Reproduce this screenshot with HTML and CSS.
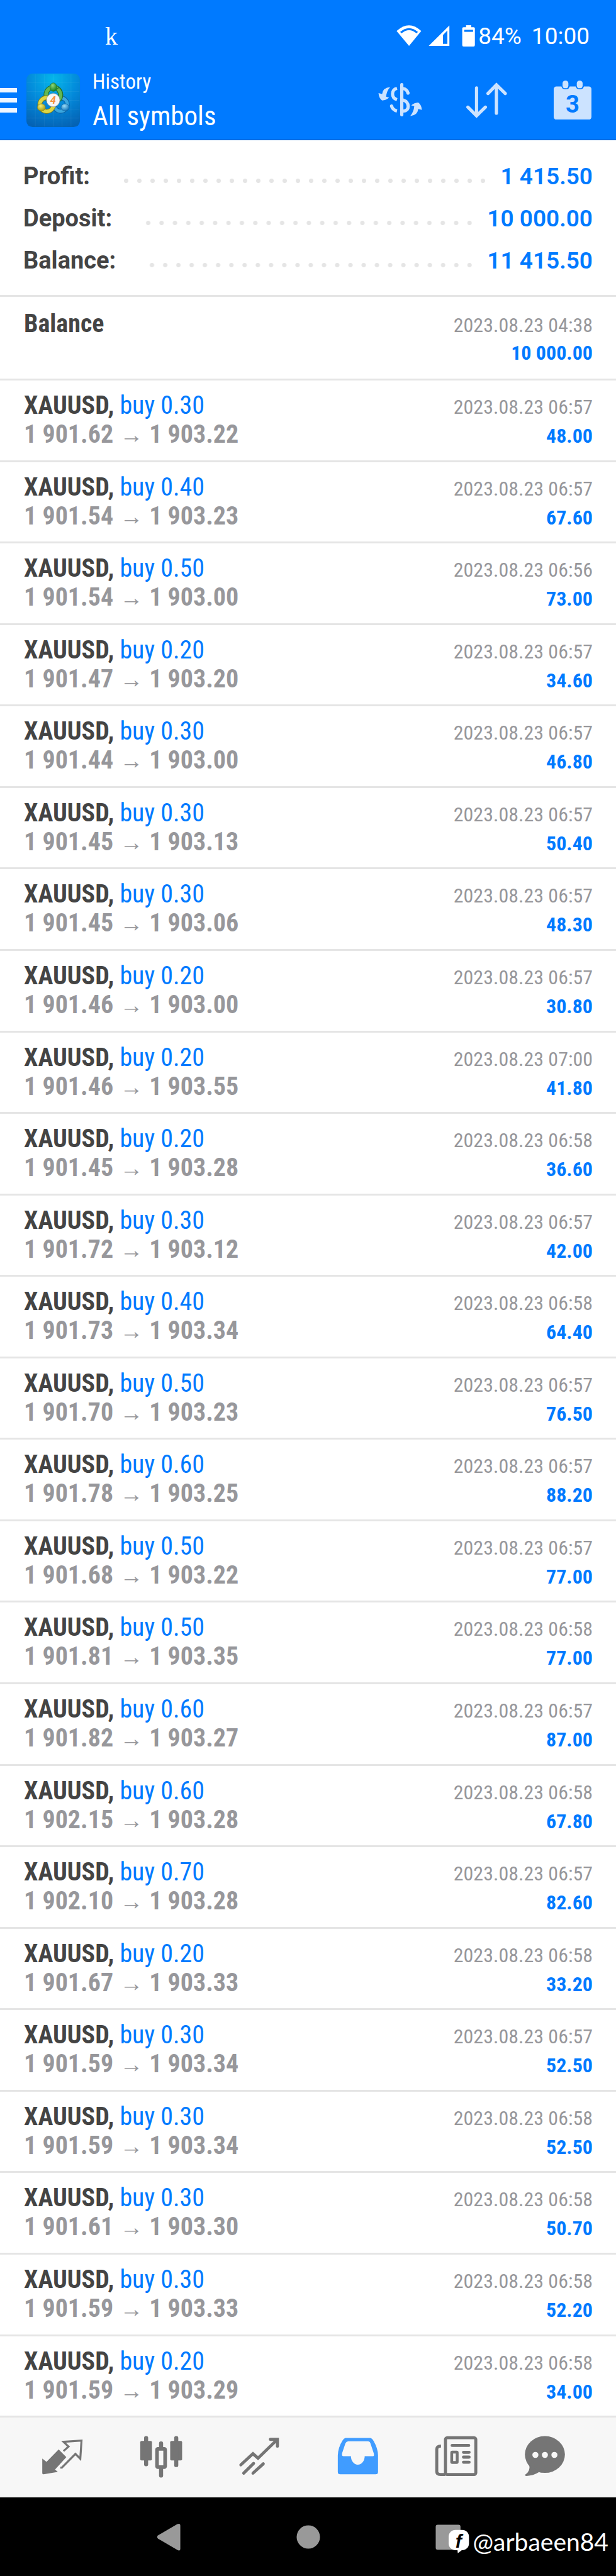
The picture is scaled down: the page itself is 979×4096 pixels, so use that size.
FILE: index.html
```html
<!DOCTYPE html>
<html lang="en">
<head>
    <meta charset="UTF-8">
    <meta name="viewport" content="width=device-width, initial-scale=1.0">
    <title>History</title>
    <link rel="stylesheet" href="styles.css">
</head>
<body>
    <header class="header">
        <div class="status">
            <span class="status-app">k</span>
            <svg class="status-icons" viewBox="410 118 398 112" aria-hidden="true">
                <path fill="#fff" d="M414 150Q476 93 537 150L476 224Z"/>
                <path fill="none" stroke="#007aff" stroke-width="10" d="M435 158Q476 123 517 158"/>
                <path fill="#fff" fill-rule="evenodd" d="M574 224L677 122V224ZM645 170V214H667V147Z"/>
                <rect fill="#fff" x="741" y="131" width="63" height="96" rx="7"/>
                <rect fill="#fff" x="760" y="121" width="26" height="14"/>
                <rect fill="#007aff" x="751" y="144" width="44" height="10"/>
            </svg>
            <span class="status-battery">84%</span>
            <span class="status-time">10:00</span>
        </div>
        <div class="appbar">
            <button class="menu" aria-label="Menu"><span></span><span></span><span></span></button>
            <svg class="logo" viewBox="132 366 264 264" aria-hidden="true">
                <defs>
                    <radialGradient id="bg" cx="0.5" cy="0.1" r="0.95">
                        <stop offset="0" stop-color="#04b6ea"/>
                        <stop offset="0.5" stop-color="#0389da"/>
                        <stop offset="1" stop-color="#0462b4"/>
                    </radialGradient>
                    <radialGradient id="green" cx="0.4" cy="0.3" r="0.7"><stop offset="0" stop-color="#8fd67a"/><stop offset="1" stop-color="#13801f"/></radialGradient>
                    <radialGradient id="yellow" cx="0.4" cy="0.3" r="0.7"><stop offset="0" stop-color="#f0ec7c"/><stop offset="1" stop-color="#a69a10"/></radialGradient>
                    <radialGradient id="blue" cx="0.4" cy="0.3" r="0.7"><stop offset="0" stop-color="#9bdcf8"/><stop offset="1" stop-color="#0f72b8"/></radialGradient>
                </defs>
                <rect x="132" y="366" width="264" height="264" rx="30" fill="url(#bg)"/>
                <path fill="none" stroke="#fff" stroke-opacity="0.1" stroke-width="2" d="M176 368V628M220 368V628M264 368V628M308 368V628M352 368V628M134 410H394M134 454H394M134 498H394M134 542H394M134 586H394"/>
                <g fill="none" stroke-linecap="round">
                    <circle cx="265" cy="470" r="36" stroke="#226f2c" stroke-width="24"/>
                    <circle cx="265" cy="470" r="36" stroke="#62b855" stroke-width="18"/>
                    <circle cx="301" cy="519" r="33" stroke="#0d5c9d" stroke-width="22"/>
                    <circle cx="301" cy="519" r="33" stroke="#3aa7df" stroke-width="16"/>
                    <circle cx="232" cy="519" r="34" stroke="#827b10" stroke-width="23"/>
                    <circle cx="232" cy="519" r="34" stroke="#ddd544" stroke-width="17"/>
                    <path stroke="#226f2c" stroke-width="24" d="M292 447Q308 470 296 491"/>
                    <path stroke="#62b855" stroke-width="17" d="M292 447Q308 470 296 491"/>
                </g>
                <ellipse cx="265" cy="433" rx="17" ry="21" fill="url(#green)" stroke="#176a20" stroke-width="2"/>
                <ellipse cx="206" cy="533" rx="20" ry="18" fill="url(#yellow)" stroke="#857c10" stroke-width="2"/>
                <ellipse cx="323" cy="533" rx="20" ry="18" fill="url(#blue)" stroke="#0e5f9d" stroke-width="2"/>
                <circle cx="264" cy="497" r="33" fill="#f6f6f6" stroke="#8c8c8c" stroke-width="2"/>
                <text x="263" y="515" text-anchor="middle" class="logo-digit">4</text>
            </svg>
            <h1 class="title">
                <span class="title-small">History</span>
                <span class="title-big">All symbols</span>
            </h1>
            <button class="action" aria-label="Deals">
                <svg viewBox="340 392 232 208" fill="none" stroke="#cce3ff" stroke-width="16">
                    <path stroke-linecap="round" d="M464 418V568"/>
                    <path d="M440 436Q418 442 418 464T440 493"/>
                    <path d="M440 549Q418 544 413 524"/>
                    <path d="M470 437Q490 440 495 460M470 494Q496 503 496 526T470 550"/>
                    <circle cx="413" cy="524" r="8" fill="#cce3ff" stroke="none"/>
                    <circle cx="495" cy="460" r="8" fill="#cce3ff" stroke="none"/>
                    <path id="swap" fill="#cce3ff" stroke="none" d="M406 430Q370 432 366 465L348 460Q350 486 366 497Q386 496 401 483L386 478Q388 450 406 430Z"/>
                    <use href="#swap" transform="rotate(180 456 502)"/>
                </svg>
            </button>
            <button class="action" aria-label="Sort">
                <svg viewBox="768 392 232 208" fill="none" stroke="#cce3ff" stroke-width="16" stroke-linecap="round">
                    <path d="M835 434V572M792 530L835 573L879 530M934 560V420M892 462L934 419L978 462"/>
                </svg>
            </button>
            <button class="action" aria-label="Period">
                <svg viewBox="1198 392 232 208">
                    <rect x="1220" y="427" width="188" height="165" rx="13" fill="#cce3ff"/>
                    <rect x="1258" y="391" width="42" height="50" rx="18" fill="#007aff"/>
                    <rect x="1329" y="391" width="42" height="50" rx="18" fill="#007aff"/>
                    <rect x="1264" y="398" width="29" height="38" rx="13" fill="#cce3ff"/>
                    <rect x="1335" y="398" width="29" height="38" rx="13" fill="#cce3ff"/>
                    <text x="1314" y="557" text-anchor="middle" class="calendar-day">3</text>
                </svg>
            </button>
        </div>
    </header>

    <section class="summary">
        <p><span>Profit:</span><i class="dots"></i><b>1 415.50</b></p>
        <p><span>Deposit:</span><i class="dots"></i><b>10 000.00</b></p>
        <p><span>Balance:</span><i class="dots"></i><b>11 415.50</b></p>
    </section>

    <div class="deal deal-balance">
        <div class="line"><strong>Balance</strong><time>2023.08.23 04:38</time></div>
        <div class="line"><span></span><b class="profit">10 000.00</b></div>
    </div>

    <ul class="deals" id="deals"></ul>

    <nav class="tabs">
        <button aria-label="Quotes">
            <svg viewBox="198 550 224 224">
                <path fill="#757575" d="M292 621L330 659L274 720L288 732L218 744Q211 744 211 738V666L232 682Z"/>
                <path fill="none" stroke="#757575" stroke-width="10" d="M316 629L341 607L316 583L405 577L399 667L375 643L308 711H300"/>
            </svg>
        </button>
        <button aria-label="Charts">
            <svg viewBox="686 550 224 224" fill="#757575">
                <rect x="695" y="579" width="58" height="96" rx="6"/>
                <rect x="714" y="555" width="20" height="149" rx="9"/>
                <rect x="843" y="579" width="59" height="96" rx="6"/>
                <rect x="863" y="555" width="20" height="153" rx="9"/>
                <rect x="788" y="581" width="20" height="36" rx="9"/>
                <rect x="788" y="708" width="20" height="52" rx="9"/>
                <rect x="778" y="618" width="40" height="90" rx="4" fill="none" stroke="#757575" stroke-width="18"/>
            </svg>
        </button>
        <button aria-label="Trade">
            <svg viewBox="1176 550 224 224" fill="none" stroke="#757575" stroke-width="15" stroke-linecap="round">
                <path d="M1197 697L1257 642L1282 664L1376 573M1343 571H1378V605M1211 738L1260 690M1257 738L1308 692"/>
            </svg>
        </button>
        <button aria-label="History">
            <svg viewBox="136 550 224 224">
                <path fill="#409cff" fill-rule="evenodd" d="M186 564H308Q318 566 326 580Q347 618 347 650V732Q347 744 335 744H160Q148 744 148 732V650Q150 610 172 576Q178 565 186 564ZM200 580Q190 581 186 590L169 640Q167 654 176 654H213A34 42 0 0 0 281 654H322Q329 654 326 640L309 590Q306 580 296 580Z"/>
            </svg>
        </button>
        <button aria-label="News">
            <svg viewBox="626 550 224 224" fill="none" stroke="#757575" stroke-width="15" stroke-linecap="round">
                <rect x="685" y="563" width="150" height="182" rx="9"/>
                <path stroke-linecap="butt" d="M663 604Q642 604 642 620V730Q642 745 660 745H684"/>
                <path d="M718 601H800M774 635H802M774 659H802M774 684H802"/>
                <rect x="716" y="634" width="27" height="51" rx="3" stroke-width="14"/>
            </svg>
        </button>
        <button aria-label="Messages">
            <svg viewBox="1067 550 224 224">
                <ellipse cx="1179" cy="646" rx="99" ry="91" fill="#757575"/>
                <path fill="#757575" d="M1102 698Q1108 730 1081 746Q1080 752 1088 752Q1122 751 1150 733Z"/>
                <g fill="#f7f7f7"><circle cx="1132" cy="648" r="15"/><circle cx="1179" cy="648" r="15"/><circle cx="1226" cy="648" r="15"/></g>
            </svg>
        </button>
    </nav>

    <footer class="system">
        <button aria-label="Back">
            <svg viewBox="733 960 200 200"><path fill="#999" d="M780 1052L876 996Q891 990 891 1004V1118Q891 1132 876 1124L780 1068Q772 1060 780 1052Z"/></svg>
        </button>
        <button aria-label="Home">
            <svg viewBox="0 960 200 200"><circle cx="100" cy="1060" r="58" fill="#999"/></svg>
        </button>
        <button aria-label="Recents">
            <svg viewBox="591 960 200 200"><rect x="630" y="999" width="123" height="124" rx="10" fill="#999"/></svg>
        </button>
        <div class="watermark">
            <svg viewBox="708 1030 110 120" aria-hidden="true">
                <rect x="711" y="1032" width="102" height="102" rx="34" fill="#fff"/>
                <path fill="#fff" d="M755 1128L757 1149L782 1130Z"/>
                <text x="761" y="1122" text-anchor="middle" class="watermark-f">f</text>
            </svg>
            <span>@arbaeen84</span>
        </div>
    </footer>

    <script>
        // volume, open price, close price, time, profit
        const deals = [
            ["0.30", "1 901.62", "1 903.22", "06:57", "48.00"],
            ["0.40", "1 901.54", "1 903.23", "06:57", "67.60"],
            ["0.50", "1 901.54", "1 903.00", "06:56", "73.00"],
            ["0.20", "1 901.47", "1 903.20", "06:57", "34.60"],
            ["0.30", "1 901.44", "1 903.00", "06:57", "46.80"],
            ["0.30", "1 901.45", "1 903.13", "06:57", "50.40"],
            ["0.30", "1 901.45", "1 903.06", "06:57", "48.30"],
            ["0.20", "1 901.46", "1 903.00", "06:57", "30.80"],
            ["0.20", "1 901.46", "1 903.55", "07:00", "41.80"],
            ["0.20", "1 901.45", "1 903.28", "06:58", "36.60"],
            ["0.30", "1 901.72", "1 903.12", "06:57", "42.00"],
            ["0.40", "1 901.73", "1 903.34", "06:58", "64.40"],
            ["0.50", "1 901.70", "1 903.23", "06:57", "76.50"],
            ["0.60", "1 901.78", "1 903.25", "06:57", "88.20"],
            ["0.50", "1 901.68", "1 903.22", "06:57", "77.00"],
            ["0.50", "1 901.81", "1 903.35", "06:58", "77.00"],
            ["0.60", "1 901.82", "1 903.27", "06:57", "87.00"],
            ["0.60", "1 902.15", "1 903.28", "06:58", "67.80"],
            ["0.70", "1 902.10", "1 903.28", "06:57", "82.60"],
            ["0.20", "1 901.67", "1 903.33", "06:58", "33.20"],
            ["0.30", "1 901.59", "1 903.34", "06:57", "52.50"],
            ["0.30", "1 901.59", "1 903.34", "06:58", "52.50"],
            ["0.30", "1 901.61", "1 903.30", "06:58", "50.70"],
            ["0.30", "1 901.59", "1 903.33", "06:58", "52.20"],
            ["0.20", "1 901.59", "1 903.29", "06:58", "34.00"]
        ];

        document.getElementById("deals").innerHTML = deals.map(([volume, open, close, time, profit]) => `
            <li class="deal">
                <div class="line"><span><strong>XAUUSD,</strong> <span class="side">buy ${volume}</span></span><time>2023.08.23 ${time}</time></div>
                <div class="line"><span class="prices">${open}<span class="arrow">→</span>${close}</span><b class="profit">${profit}</b></div>
            </li>`).join("");
    </script>
</body>
</html>
```
FILE: styles.css
```css
* {
    box-sizing: border-box;
}
body {
    margin: 0;
    min-height: 100vh;
    display: flex;
    flex-direction: column;
    background: #fff;
    color: #444;
    font-family: "Roboto Condensed", Roboto, sans-serif;
}
button {
    padding: 0;
    border: 0;
    background: none;
    cursor: pointer;
}
svg {
    display: block;
}

.header {
    background: #007aff;
    border-bottom: 2px solid #006de6;
    color: #fff;
}
.status {
    display: flex;
    align-items: center;
    height: 98px;
    padding: 16px 42px 0 167px;
    font-family: Roboto, sans-serif;
    font-size: 37px;
}
.status-app {
    margin-right: auto;
    font-family: "Liberation Serif", serif;
    font-size: 40px;
}
.status-icons {
    width: 127px;
    height: 36px;
}
.status-battery {
    margin: 0 16px 0 4px;
}
.appbar {
    display: flex;
    align-items: center;
    height: 123px;
    padding-right: 32px;
}
.menu {
    width: 27px;
    margin-right: 15px;
}
.menu span {
    display: block;
    height: 7px;
    background: #f0f6ff;
}
.menu span + span {
    margin-top: 9px;
}
.logo {
    width: 85px;
    height: 85px;
}
.logo-digit {
    font: italic bold 50px Roboto, sans-serif;
    fill: #f7903a;
}
.title {
    flex: 1;
    margin: 0 0 0 20px;
    padding-bottom: 6px;
    font-weight: 400;
    line-height: 54px;
}
.title span {
    display: block;
}
.title-small {
    font-size: 33px;
}
.title-big {
    font-size: 43px;
}
.action + .action {
    margin-left: 63px;
}
.action svg {
    width: 74px;
    height: 67px;
}
.calendar-day {
    font: bold 120px Roboto, sans-serif;
    fill: #007aff;
}

.summary {
    padding: 24px 37px 21px 37px;
    border-bottom: 3px solid #e5e5e5;
    font: bold 38px/67px Roboto, sans-serif;
}
.summary p {
    display: flex;
    margin: 0;
}
.summary b {
    font-size: 37px;
    font-weight: 600;
    color: #007aff;
}
.dots {
    flex: 1;
    height: 7px;
    margin: 37px 17px 0 47px;
    background: radial-gradient(circle, #e5e5e5 3px, transparent 4px) 0 0 / 21px 7px space;
}

.deals {
    flex: 1;
    display: flex;
    flex-direction: column;
    margin: 0;
    padding: 0;
    list-style: none;
}
.deal {
    flex: 1;
    padding: 17px 37px 0 38px;
    border-bottom: 3px solid #e5e5e5;
}
.deal-balance {
    flex: none;
    padding-top: 20px;
    padding-bottom: 18px;
}
.line {
    display: flex;
    justify-content: space-between;
    align-items: baseline;
    height: 46px;
    font-size: 40px;
    line-height: 46px;
}
.line time,
.profit {
    font-size: 32px;
}
.line time,
.prices {
    color: #97979b;
}
.prices {
    font-weight: bold;
}
.side,
.profit {
    color: #007aff;
}
.arrow {
    margin: 0 10px;
    font-family: "Liberation Serif", serif;
    font-size: 37px;
    line-height: 1;
}

.tabs {
    display: grid;
    grid-template-columns: repeat(5, 5fr) 4fr;
    align-items: center;
    height: 127px;
    padding: 0 50px 0 21px;
    background: #f7f7f7;
}
.tabs svg {
    width: 72px;
    height: 72px;
    margin: 0 auto;
}

.system {
    position: relative;
    display: flex;
    justify-content: center;
    align-items: center;
    gap: 158px;
    height: 125px;
    background: #000;
}
.system button svg {
    width: 64px;
    height: 64px;
}
.watermark {
    position: absolute;
    right: 12px;
    top: 46px;
    display: flex;
    align-items: center;
    gap: 4px;
    color: #fff;
    font: 39px/48px Lato, sans-serif;
}
.watermark svg {
    width: 35px;
    height: 38px;
}
.watermark-f {
    font: italic bold 96px "Liberation Sans", sans-serif;
}
```
